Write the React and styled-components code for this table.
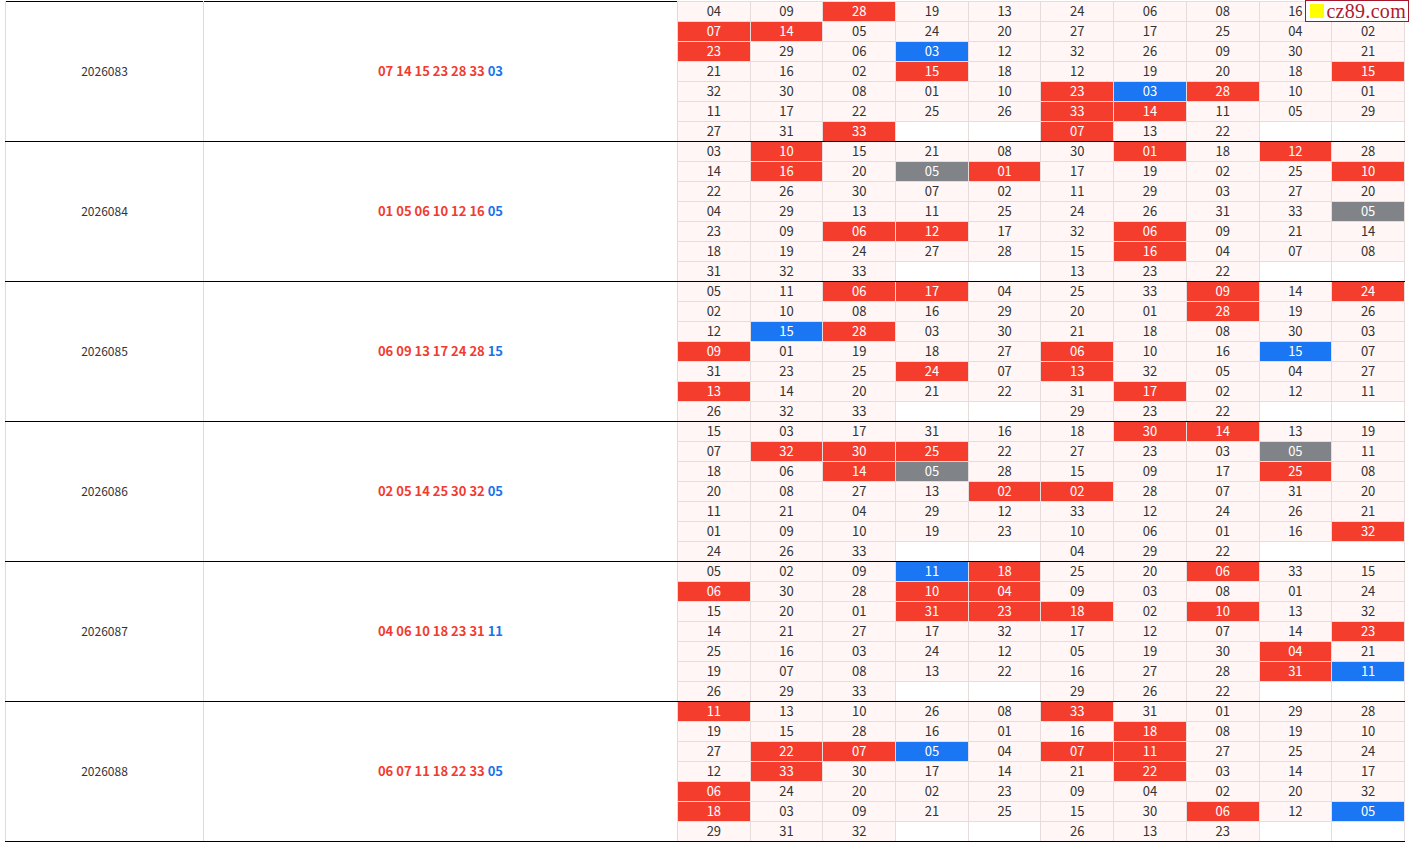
import React from "react";
import styled, { createGlobalStyle } from "styled-components";

const Global = createGlobalStyle`
  html, body { margin: 0; padding: 0; background: #fff; }
  body { font-family: "Noto Sans CJK SC", "Noto Sans", sans-serif; color: #333; }
`;

const Page = styled.div`
  position: relative;
  padding: 1px 0 0 5px;
`;

const Table = styled.table`
  width: 1400px;
  table-layout: fixed;
  border-collapse: collapse;
  border-top: 1px solid #000;
`;

const PeriodCell = styled.td`
  padding: 0 0 2px;
  text-align: center;
  vertical-align: middle;
  font-size: 12px;
  color: #333;
  border-left: 1px solid #dcdcdc;
  border-right: 1px solid #dcdcdc;
  border-bottom: 1px solid #000;
`;

const DrawCell = styled(PeriodCell)`
  font-weight: bold;
  font-size: 13px;
`;

const Ball = styled.span`
  color: ${(p) => (p.$blue ? "#1a73e8" : "#f23b2f")};
`;

const bgFor = (k) =>
  k === "r" ? "#f53d2d" : k === "b" ? "#1a76f2" : k === "g" ? "#808387" : k === "e" ? "#fff" : "#fff6f5";

const NumCell = styled.td`
  height: 18px;
  padding: 0 0 1px;
  text-align: center;
  font-size: 13px;
  line-height: 18px;
  color: ${(p) => (p.$kind && p.$kind !== "e" ? "#fff" : "#333")};
  background: ${(p) => bgFor(p.$kind)};
  border: 1px solid #e6dcdc;
  border-left: ${(p) => (p.$split ? "1px solid #000" : "1px solid #e6dcdc")};
  border-bottom: ${(p) => (p.$last ? "1px solid #000" : "1px solid #e6dcdc")};
`;

const Logo = styled.div`
  position: absolute;
  top: 0;
  right: 1px;
  display: flex;
  align-items: center;
  gap: 2px;
  height: 20px;
  padding: 0 2px 0 4px;
  background: #fff;
  border: 1px solid #a3162c;
`;

const LogoMark = styled.span`
  width: 14px;
  height: 14px;
  background: #ffff00;
`;

const LogoText = styled.span`
  font-family: "Liberation Serif", serif;
  font-size: 20px;
  line-height: 20px;
  color: #ad1a30;
  letter-spacing: 0.3px;
`;

// cell notation: "28r" red, "03b" blue, "05g" gray, "-" empty white, "~" pink but covered
const blocks = [
  {
    period: "2026083",
    reds: "07 14 15 23 28 33",
    blue: "03",
    rows: [
      "04 09 28r 19 13 24 06 08 16 ~",
      "07r 14r 05 24 20 27 17 25 04 02",
      "23r 29 06 03b 12 32 26 09 30 21",
      "21 16 02 15r 18 12 19 20 18 15r",
      "32 30 08 01 10 23r 03b 28r 10 01",
      "11 17 22 25 26 33r 14r 11 05 29",
      "27 31 33r - - 07r 13 22 - -",
    ],
  },
  {
    period: "2026084",
    reds: "01 05 06 10 12 16",
    blue: "05",
    rows: [
      "03 10r 15 21 08 30 01r 18 12r 28",
      "14 16r 20 05g 01r 17 19 02 25 10r",
      "22 26 30 07 02 11 29 03 27 20",
      "04 29 13 11 25 24 26 31 33 05g",
      "23 09 06r 12r 17 32 06r 09 21 14",
      "18 19 24 27 28 15 16r 04 07 08",
      "31 32 33 - - 13 23 22 - -",
    ],
  },
  {
    period: "2026085",
    reds: "06 09 13 17 24 28",
    blue: "15",
    rows: [
      "05 11 06r 17r 04 25 33 09r 14 24r",
      "02 10 08 16 29 20 01 28r 19 26",
      "12 15b 28r 03 30 21 18 08 30 03",
      "09r 01 19 18 27 06r 10 16 15b 07",
      "31 23 25 24r 07 13r 32 05 04 27",
      "13r 14 20 21 22 31 17r 02 12 11",
      "26 32 33 - - 29 23 22 - -",
    ],
  },
  {
    period: "2026086",
    reds: "02 05 14 25 30 32",
    blue: "05",
    rows: [
      "15 03 17 31 16 18 30r 14r 13 19",
      "07 32r 30r 25r 22 27 23 03 05g 11",
      "18 06 14r 05g 28 15 09 17 25r 08",
      "20 08 27 13 02r 02r 28 07 31 20",
      "11 21 04 29 12 33 12 24 26 21",
      "01 09 10 19 23 10 06 01 16 32r",
      "24 26 33 - - 04 29 22 - -",
    ],
  },
  {
    period: "2026087",
    reds: "04 06 10 18 23 31",
    blue: "11",
    rows: [
      "05 02 09 11b 18r 25 20 06r 33 15",
      "06r 30 28 10r 04r 09 03 08 01 24",
      "15 20 01 31r 23r 18r 02 10r 13 32",
      "14 21 27 17 32 17 12 07 14 23r",
      "25 16 03 24 12 05 19 30 04r 21",
      "19 07 08 13 22 16 27 28 31r 11b",
      "26 29 33 - - 29 26 22 - -",
    ],
  },
  {
    period: "2026088",
    reds: "06 07 11 18 22 33",
    blue: "05",
    rows: [
      "11r 13 10 26 08 33r 31 01 29 28",
      "19 15 28 16 01 16 18r 08 19 10",
      "27 22r 07r 05b 04 07r 11r 27 25 24",
      "12 33r 30 17 14 21 22r 03 14 17",
      "06r 24 20 02 23 09 04 02 20 32",
      "18r 03 09 21 25 15 30 06r 12 05b",
      "29 31 32 - - 26 13 23 - -",
    ],
  },
];

const parse = (tok) => {
  if (tok === "-") return { text: "", kind: "e" };
  if (tok === "~") return { text: "", kind: null };
  const m = tok.match(/^(\d+)([rbg]?)$/);
  return { text: m[1], kind: m[2] || null };
};

function Block({ block }) {
  return block.rows.map((row, ri) => {
    const cells = row.split(" ").map(parse);
    const last = ri === block.rows.length - 1;
    return (
      <tr key={ri}>
        {ri === 0 && (
          <>
            <PeriodCell rowSpan={7}>{block.period}</PeriodCell>
            <DrawCell rowSpan={7}>
              <Ball>{block.reds}</Ball> <Ball $blue>{block.blue}</Ball>
            </DrawCell>
          </>
        )}
        {cells.map((c, ci) => (
          <NumCell key={ci} $kind={c.kind} $split={ci === 5} $last={last}>
            {c.text}
          </NumCell>
        ))}
      </tr>
    );
  });
}

export default function App() {
  return (
    <>
      <Global />
      <Page>
        <Table>
          <colgroup>
            <col style={{ width: 198 }} />
            <col style={{ width: 474 }} />
            {Array.from({ length: 10 }).map((_, i) => (
              <col key={i} />
            ))}
          </colgroup>
          <tbody>
            {blocks.map((b) => (
              <Block key={b.period} block={b} />
            ))}
          </tbody>
        </Table>
        <Logo>
          <LogoMark />
          <LogoText>cz89.com</LogoText>
        </Logo>
      </Page>
    </>
  );
}
